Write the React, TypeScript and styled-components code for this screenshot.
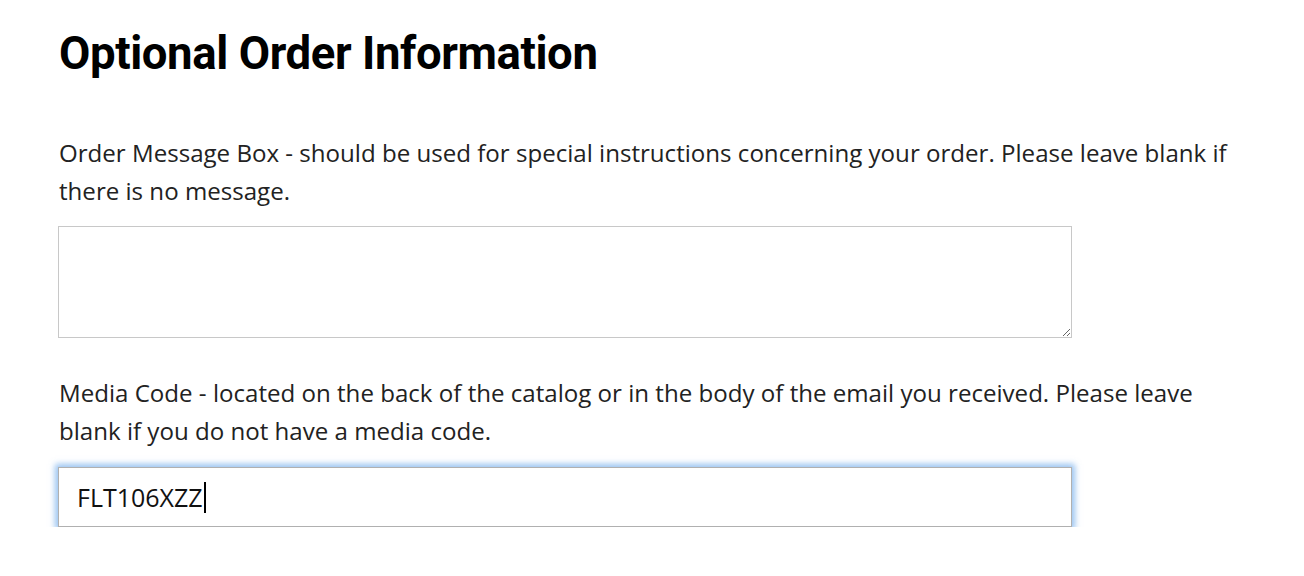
import React from "react";
import styled, { createGlobalStyle } from "styled-components";

const Global = createGlobalStyle`
  html, body { margin: 0; padding: 0; background: #fff; }
  body { font-family: "Open Sans", "Noto Sans", sans-serif; color: #222; }
`;

const Page = styled.main`
  padding: 26px 0 0 59px;
  width: 1178px;
`;

const Heading = styled.h2`
  margin: 0;
  font-family: Roboto, "Liberation Sans", sans-serif;
  font-weight: 700;
  font-size: 45.5px;
  line-height: 56px;
  color: #000;
  letter-spacing: -0.4px;
`;

const Hint = styled.p`
  margin: 0;
  font-family: "Open Sans", "Noto Sans", sans-serif;
  font-size: 24.1px;
  line-height: 38px;
  color: #222;
  font-weight: 400;
`;

const Field = styled.div<{ $top: number; $gap: number }>`
  margin-top: ${(p) => p.$top}px;
  display: flex;
  flex-direction: column;
  gap: ${(p) => p.$gap}px;
`;

const MessageBox = styled.textarea`
  box-sizing: border-box;
  width: 1014px;
  height: 112px;
  border: 1px solid #c8c8c8;
  border-radius: 0;
  margin: 0 0 0 -1px;
  padding: 8px 12px;
  font-family: "Open Sans", sans-serif;
  font-size: 20px;
  outline: none;
  resize: both;
`;

const CodeInput = styled.div`
  box-sizing: border-box;
  width: 1014px;
  height: 60px;
  margin-left: -1px;
  border: 1px solid #b0b0b0;
  box-shadow: 0 0 6px 3px rgba(110, 170, 235, 0.7);
  display: flex;
  align-items: center;
  padding: 0 18px;
  font-family: "Open Sans", "Noto Sans", sans-serif;
  font-size: 25px;
  color: #111;
`;

const Caret = styled.span`
  display: inline-block;
  width: 2px;
  height: 31px;
  background: #000;
  margin-left: 1px;
`;

export default function App() {
  return (
    <>
      <Global />
      <Page>
        <Heading>Optional Order Information</Heading>
        <Field $top={52} $gap={16}>
          <Hint>
            Order Message Box - should be used for special instructions concerning your order. Please leave blank if
            there is no message.
          </Hint>
          <MessageBox aria-label="Order message" />
        </Field>
        <Field $top={36} $gap={17}>
          <Hint>
            Media Code - located on the back of the catalog or in the body of the email you received. Please leave
            blank if you do not have a media code.
          </Hint>
          <CodeInput role="textbox" aria-label="Media code">
            FLT106XZZ
            <Caret />
          </CodeInput>
        </Field>
      </Page>
    </>
  );
}
